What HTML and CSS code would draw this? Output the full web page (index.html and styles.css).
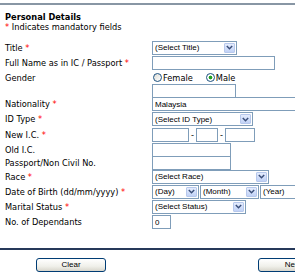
FILE: index.html
```html
<!DOCTYPE html>
<html lang="en">
<head>
    <meta charset="UTF-8">
    <meta name="viewport" content="width=device-width, initial-scale=1.0">
    <title>Personal Details</title>
    <link rel="stylesheet" href="styles.css">
</head>
<body>
    <div class="top-rule"></div>
    <form class="details-form" id="detailsForm">
        <div class="section-head">
            <h2>Personal Details</h2>
            <p><span class="req">*</span> Indicates mandatory fields</p>
        </div>

        <div class="fields">
            <label class="r-title" for="title">Title <span class="req">*</span></label>
            <span class="dropdown w-title">
                <select id="title"><option>(Select Title)</option></select>
                <span class="arrow"><svg width="7" height="5" viewBox="0 0 7 5"><path d="M0.8 1 L3.5 3.7 L6.2 1" fill="none" stroke="#3b4f7a" stroke-width="1.5"/></svg></span>
            </span>

            <label class="r-name" for="fullname">Full Name as in IC / Passport <span class="req">*</span></label>
            <input class="w-name" type="text" id="fullname">

            <span class="r-gender">Gender</span>
            <span class="radios">
                <label><input type="radio" name="gender"> Female</label>
                <label><input type="radio" name="gender" checked> Male</label>
            </span>

            <span class="r-blank"></span>
            <input class="w-blank" type="text">

            <label class="r-nat" for="nationality">Nationality <span class="req">*</span></label>
            <input class="w-nat" type="text" id="nationality" value="Malaysia">

            <label class="r-idtype" for="idtype">ID Type <span class="req">*</span></label>
            <span class="dropdown w-idtype">
                <select id="idtype"><option>(Select ID Type)</option></select>
                <span class="arrow"><svg width="7" height="5" viewBox="0 0 7 5"><path d="M0.8 1 L3.5 3.7 L6.2 1" fill="none" stroke="#3b4f7a" stroke-width="1.5"/></svg></span>
            </span>

            <label class="r-newic" for="ic1">New I.C. <span class="req">*</span></label>
            <span class="ic-group">
                <input class="w-ic1" type="text" id="ic1"><span class="dash">-</span><input class="w-ic2" type="text"><span class="dash">-</span><input class="w-ic3" type="text">
            </span>

            <label class="r-oldic" for="oldic">Old I.C.</label>
            <input class="w-old" type="text" id="oldic">

            <label class="r-pass" for="passport">Passport/Non Civil No.</label>
            <input class="w-old" type="text" id="passport">

            <label class="r-race" for="race">Race <span class="req">*</span></label>
            <span class="dropdown w-race">
                <select id="race"><option>(Select Race)</option></select>
                <span class="arrow"><svg width="7" height="5" viewBox="0 0 7 5"><path d="M0.8 1 L3.5 3.7 L6.2 1" fill="none" stroke="#3b4f7a" stroke-width="1.5"/></svg></span>
            </span>

            <label class="r-dob" for="day">Date of Birth (dd/mm/yyyy) <span class="req">*</span></label>
            <span class="dob-group">
                <span class="dropdown w-day">
                    <select id="day"><option>(Day)</option></select>
                    <span class="arrow"><svg width="7" height="5" viewBox="0 0 7 5"><path d="M0.8 1 L3.5 3.7 L6.2 1" fill="none" stroke="#3b4f7a" stroke-width="1.5"/></svg></span>
                </span>
                <span class="dropdown w-month">
                    <select><option>(Month)</option></select>
                    <span class="arrow"><svg width="7" height="5" viewBox="0 0 7 5"><path d="M0.8 1 L3.5 3.7 L6.2 1" fill="none" stroke="#3b4f7a" stroke-width="1.5"/></svg></span>
                </span>
                <span class="dropdown w-year">
                    <select><option>(Year)</option></select>
                    <span class="arrow"><svg width="7" height="5" viewBox="0 0 7 5"><path d="M0.8 1 L3.5 3.7 L6.2 1" fill="none" stroke="#3b4f7a" stroke-width="1.5"/></svg></span>
                </span>
            </span>

            <label class="r-marital" for="marital">Marital Status <span class="req">*</span></label>
            <span class="dropdown w-status">
                <select id="marital"><option>(Select Status)</option></select>
                <span class="arrow"><svg width="7" height="5" viewBox="0 0 7 5"><path d="M0.8 1 L3.5 3.7 L6.2 1" fill="none" stroke="#3b4f7a" stroke-width="1.5"/></svg></span>
            </span>

            <label class="r-dep" for="dependants">No. of Dependants</label>
            <input class="w-dep" type="text" id="dependants" value="0">
        </div>

        <div class="bottom-rule"></div>
        <div class="actions">
            <button type="reset">Clear</button>
            <button type="submit">Next</button>
        </div>
    </form>
</body>
</html>
```

FILE: styles.css
```css
html {
    overflow: hidden;
}
body {
    margin: 0;
    padding: 0;
    background-color: #fff;
    color: #000;
    font-family: "DejaVu Sans", Verdana, sans-serif;
    font-size: 8.25px;
}
.top-rule {
    height: 3px;
    border-bottom: 2px solid #8896a4;
}
.details-form {
    width: 520px;
}
.section-head {
    padding: 7px 0 0 5px;
}
.section-head h2 {
    margin: 0;
    font-size: 8.25px;
    line-height: 10px;
    font-weight: bold;
}
.section-head p {
    margin: 0;
    line-height: 10px;
}
.req {
    color: #f00;
}
.fields {
    display: grid;
    grid-template-columns: 147px auto;
    grid-template-rows: 15px 16px 13px 13px 14px 16px 16px 13px 13px 15px 15px 15px 16px;
    align-items: center;
    justify-items: start;
    margin-top: 8px;
    padding-left: 5px;
}
.fields > label,
.fields > span:nth-child(odd) {
    line-height: 10px;
    white-space: nowrap;
}
input[type="text"] {
    box-sizing: border-box;
    height: 14px;
    margin: 0;
    padding: 0 2px;
    border: 1px solid #7f9db9;
    font-family: "Liberation Sans", Arial, sans-serif;
    font-size: 8px;
    color: #000;
    outline: none;
}
.w-name { width: 123px; }
.w-blank { width: 84px; }
.w-nat { width: 170px; }
.w-old { width: 79px; }
.w-dep { width: 19px; }
.w-ic1 { width: 37px; }
.w-ic2 { width: 22px; }
.w-ic3 { width: 30px; }

.dropdown {
    box-sizing: border-box;
    display: inline-flex;
    align-items: center;
    height: 14px;
    border: 1px solid #7f9db9;
    background: #fff;
}
.dropdown select {
    appearance: none;
    -webkit-appearance: none;
    flex: 1;
    min-width: 0;
    height: 12px;
    margin: 0;
    padding: 0 2px;
    border: none;
    background: transparent;
    font-family: "Liberation Sans", Arial, sans-serif;
    font-size: 8px;
    color: #000;
    outline: none;
}
.arrow {
    box-sizing: border-box;
    display: flex;
    align-items: center;
    justify-content: center;
    width: 11px;
    height: 10px;
    margin-right: 1px;
    border: 1px solid #b7c8ec;
    border-radius: 1px;
    background: linear-gradient(#e4ecfd, #c1d2f6);
}
.w-title { width: 85px; }
.w-idtype { width: 101px; }
.w-race { width: 117px; }
.w-status { width: 94px; }
.w-day { width: 47px; }
.w-month { width: 59px; }
.w-year { width: 60px; }

.radios {
    display: flex;
    gap: 12px;
    line-height: 10px;
}
.radios label {
    display: inline-flex;
    align-items: center;
    gap: 1px;
}
.radios input {
    appearance: none;
    -webkit-appearance: none;
    box-sizing: border-box;
    width: 9px;
    height: 9px;
    margin: 0 0 0 1px;
    border: 1px solid #1c5180;
    border-radius: 50%;
    background: linear-gradient(135deg, #dcdcd5, #fff);
}
.radios input:checked {
    background: radial-gradient(circle, #21a121 0, #21a121 1.6px, #fff 2.2px);
}

.ic-group,
.dob-group {
    display: flex;
    align-items: center;
}
.dash {
    width: 7px;
    text-align: center;
    line-height: 10px;
}
.dob-group {
    gap: 1px;
}

.bottom-rule {
    margin-top: 18px;
    border-top: 2px solid #26395a;
    width: 295px;
}
.actions {
    display: flex;
    gap: 152px;
    padding: 8px 0 0 36px;
}
.actions button {
    box-sizing: border-box;
    width: 70px;
    height: 14px;
    padding: 0;
    border: 1px solid #003c74;
    border-radius: 3px;
    background: linear-gradient(#fff, #f0f0ea 60%, #d8d6cc);
    font-family: "Liberation Sans", Arial, sans-serif;
    font-size: 8px;
    color: #000;
    line-height: 12px;
}
```
